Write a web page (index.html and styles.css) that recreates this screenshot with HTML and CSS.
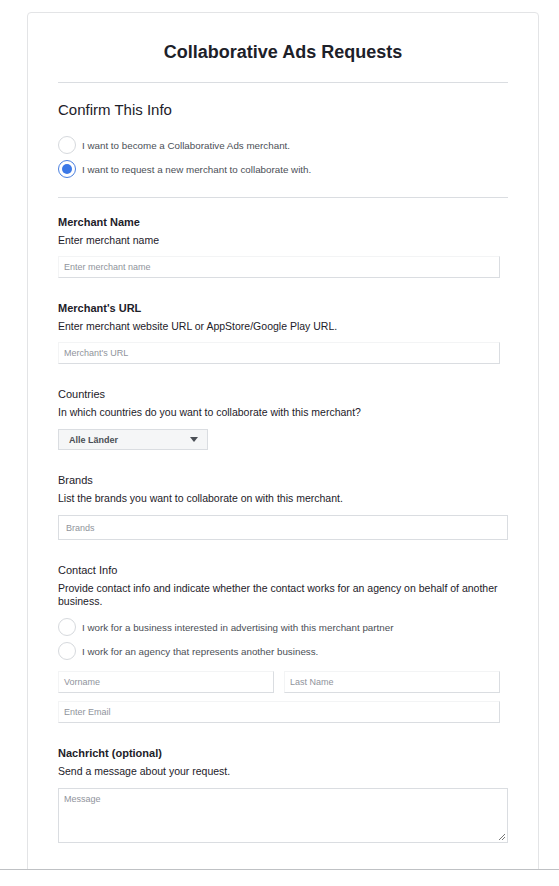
FILE: index.html
```html
<!DOCTYPE html>
<html lang="en">
<head>
<meta charset="utf-8">
<title>Collaborative Ads Requests</title>
<link rel="stylesheet" href="styles.css">
</head>
<body>
<div class="stage">
  <div class="card">
    <h1 class="title">Collaborative Ads Requests</h1>
    <hr class="rule">
    <h2 class="subtitle">Confirm This Info</h2>
    <div class="radios top-radios">
      <label class="radio-row"><span class="radio"></span><span class="radio-text">I want to become a Collaborative Ads merchant.</span></label>
      <label class="radio-row"><span class="radio checked"></span><span class="radio-text">I want to request a new merchant to collaborate with.</span></label>
    </div>
    <hr class="rule rule-2">

    <section class="field first">
      <div class="label bold">Merchant Name</div>
      <div class="desc">Enter merchant name</div>
      <div class="input short"><span class="ph">Enter merchant name</span></div>
    </section>

    <section class="field">
      <div class="label bold">Merchant's URL</div>
      <div class="desc">Enter merchant website URL or AppStore/Google Play URL.</div>
      <div class="input short"><span class="ph">Merchant's URL</span></div>
    </section>

    <section class="field">
      <div class="label">Countries</div>
      <div class="desc">In which countries do you want to collaborate with this merchant?</div>
      <div class="select"><span>Alle Länder</span><span class="caret"></span></div>
    </section>

    <section class="field">
      <div class="label">Brands</div>
      <div class="desc">List the brands you want to collaborate on with this merchant.</div>
      <div class="input boxed"><span class="ph">Brands</span></div>
    </section>

    <section class="field">
      <div class="label">Contact Info</div>
      <div class="desc">Provide contact info and indicate whether the contact works for an agency on behalf of another business.</div>
      <div class="radios contact-radios">
        <label class="radio-row"><span class="radio"></span><span class="radio-text">I work for a business interested in advertising with this merchant partner</span></label>
        <label class="radio-row"><span class="radio"></span><span class="radio-text">I work for an agency that represents another business.</span></label>
      </div>
      <div class="name-row">
        <div class="input half"><span class="ph">Vorname</span></div>
        <div class="input half"><span class="ph">Last Name</span></div>
      </div>
      <div class="input short email"><span class="ph">Enter Email</span></div>
    </section>

    <section class="field">
      <div class="label bold">Nachricht (optional)</div>
      <div class="desc">Send a message about your request.</div>
      <div class="textarea"><span class="ph">Message</span>
        <svg class="grip" width="9" height="9" viewBox="0 0 9 9"><path d="M8 2 L2 8 M8 5 L5 8" stroke="#777" stroke-width="1" fill="none"/></svg>
      </div>
    </section>
  </div>
</div>
<div class="footer"></div>
</body>
</html>
```

FILE: styles.css
```css
* { box-sizing: border-box; }

html, body {
  margin: 0;
  padding: 0;
  background: #fff;
  font-family: "Liberation Sans", Arial, sans-serif;
  color: #1d2129;
}

.stage {
  height: 869px;
  padding-top: 12px;
  overflow: hidden;
}

.card {
  margin-left: 27px;
  width: 512px;
  min-height: 900px;
  border: 1px solid #e3e4e6;
  border-radius: 4px;
  padding: 27px 30px 0 30px;
}

.title {
  margin: 0;
  font-size: 18px;
  line-height: 24px;
  font-weight: bold;
  text-align: center;
  color: #1d2129;
}

.rule {
  margin: 18px 0 0;
  border: 0;
  border-top: 1px solid #dadde1;
  height: 0;
}

.subtitle {
  margin: 17px 0 0;
  font-size: 15px;
  line-height: 20px;
  font-weight: normal;
  color: #1d2129;
}

.radios {
  display: flex;
  flex-direction: column;
  gap: 4px;
}

.top-radios { margin-top: 15px; }
.contact-radios { margin-top: 9px; }

.radio-row {
  display: flex;
  align-items: center;
  gap: 6px;
  height: 20px;
}

.radio {
  flex: none;
  width: 18px;
  height: 18px;
  border-radius: 50%;
  border: 1px solid #d6d9dd;
  background: #fff;
  display: flex;
  align-items: center;
  justify-content: center;
}

.radio.checked {
  border-color: #4a7fe0;
}

.radio.checked::after {
  content: "";
  width: 10px;
  height: 10px;
  border-radius: 50%;
  background: #3b78e7;
}

.radio-text {
  font-size: 9.8px;
  color: #4b4f56;
}

.rule-2 { margin-top: 18px; }

.field { margin-top: 23px; }
.field.first { margin-top: 17px; }

.label {
  font-size: 11px;
  line-height: 14px;
  color: #1d2129;
}

.label.bold { font-weight: bold; }

.desc {
  margin-top: 5px;
  font-size: 10.5px;
  line-height: 13px;
  color: #1d2129;
}

.input {
  margin-top: 9px;
  height: 22px;
  border: 1px solid;
  border-color: #f3f4f5 #dadde1 #dadde1 #f3f4f5;
  display: flex;
  align-items: center;
  padding-left: 5px;
}

.input.short { width: 442px; }

.input.boxed {
  width: 450px;
  height: 25px;
  margin-top: 10px;
  border: 1px solid #dadde1;
  padding-left: 7px;
}

.ph {
  font-size: 9px;
  color: #90949c;
}

.select {
  margin-top: 10px;
  width: 150px;
  height: 21px;
  background: #f5f6f7;
  border: 1px solid #dadde1;
  display: flex;
  align-items: center;
  justify-content: space-between;
  padding: 0 9px 0 10px;
  font-size: 9px;
  font-weight: bold;
  color: #4b4f56;
}

.caret {
  width: 0;
  height: 0;
  border-left: 4px solid transparent;
  border-right: 4px solid transparent;
  border-top: 5px solid #4b4f56;
}

.name-row {
  margin-top: 10px;
  display: flex;
  gap: 10px;
  width: 442px;
}

.name-row .input {
  margin-top: 0;
  flex: 1;
}

.input.email { margin-top: 8px; }

.textarea {
  position: relative;
  margin-top: 10px;
  width: 450px;
  height: 55px;
  border: 1px solid #dadde1;
  padding: 2px 5px;
  line-height: 11px;
}

.grip {
  position: absolute;
  right: 1px;
  bottom: 1px;
}

.footer {
  height: 17px;
  border-top: 1px solid #bfc1c4;
}
```
